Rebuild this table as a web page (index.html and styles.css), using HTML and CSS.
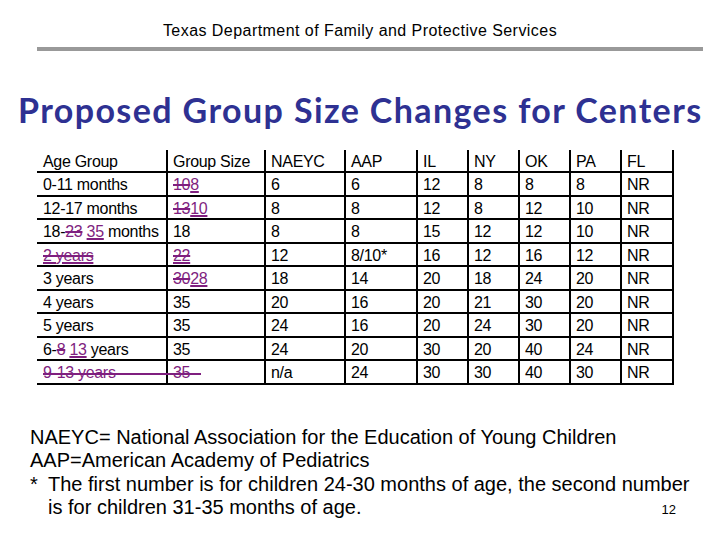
FILE: index.html
```html
<!DOCTYPE html>
<html>
<head>
<meta charset="utf-8">
<link rel="stylesheet" href="styles.css">
</head>
<body>
<div class="slide">
  <header class="top">
    <div class="agency">Texas Department of Family and Protective Services</div>
    <div class="rule"></div>
  </header>
  <h1 class="title">Proposed Group Size Changes for Centers</h1>
  <table class="grid">
    <colgroup>
      <col class="c1"><col class="c2"><col class="c3"><col class="c4"><col class="c5"><col class="c6"><col class="c7"><col class="c8"><col class="c9">
    </colgroup>
    <thead>
      <tr><th>Age Group</th><th>Group Size</th><th>NAEYC</th><th>AAP</th><th>IL</th><th>NY</th><th>OK</th><th>PA</th><th>FL</th></tr>
    </thead>
    <tbody>
      <tr><td>0-11 months</td><td><s class="ed">10</s><u class="ed">8</u></td><td>6</td><td>6</td><td>12</td><td>8</td><td>8</td><td>8</td><td>NR</td></tr>
      <tr><td>12-17 months</td><td><s class="ed">13</s><u class="ed">10</u></td><td>8</td><td>8</td><td>12</td><td>8</td><td>12</td><td>10</td><td>NR</td></tr>
      <tr><td>18-<s class="ed">23</s> <u class="ed">35</u> months</td><td>18</td><td>8</td><td>8</td><td>15</td><td>12</td><td>12</td><td>10</td><td>NR</td></tr>
      <tr><td><span class="ed del">2 years</span></td><td><span class="ed del">22</span></td><td>12</td><td>8/10*</td><td>16</td><td>12</td><td>16</td><td>12</td><td>NR</td></tr>
      <tr><td>3 years</td><td><s class="ed">30</s><u class="ed">28</u></td><td>18</td><td>14</td><td>20</td><td>18</td><td>24</td><td>20</td><td>NR</td></tr>
      <tr><td>4 years</td><td>35</td><td>20</td><td>16</td><td>20</td><td>21</td><td>30</td><td>20</td><td>NR</td></tr>
      <tr><td>5 years</td><td>35</td><td>24</td><td>16</td><td>20</td><td>24</td><td>30</td><td>20</td><td>NR</td></tr>
      <tr><td>6-<s class="ed">8</s> <u class="ed">13</u> years</td><td>35</td><td>24</td><td>20</td><td>30</td><td>20</td><td>40</td><td>24</td><td>NR</td></tr>
      <tr><td class="struckrow"><span class="ed">9-13 years</span></td><td><span class="ed">35</span></td><td>n/a</td><td>24</td><td>30</td><td>30</td><td>40</td><td>30</td><td>NR</td></tr>
    </tbody>
  </table>
  <div class="notes">
    <div class="line">NAEYC= National Association for the Education of Young Children</div>
    <div class="line">AAP=American Academy of Pediatrics</div>
    <div class="line star"><span class="mark">*</span><span>The first number is for children 24-30 months of age, the second number</span></div>
    <div class="line cont"><span>is for children 31-35 months of age.</span><span class="pageno">12</span></div>
  </div>
</div>
</body>
</html>
```
FILE: styles.css
```css
html, body {
  margin: 0;
  padding: 0;
  background: #ffffff;
}
.slide {
  width: 720px;
  height: 540px;
  overflow: hidden;
  padding-top: 22px;
  box-sizing: border-box;
  font-family: "Liberation Sans", Arial, sans-serif;
  color: #000;
}
.agency {
  text-align: center;
  font-size: 16px;
  line-height: 18px;
  letter-spacing: 0.45px;
  color: #000;
}
.rule {
  margin: 7px 0 0 37px;
  width: 666px;
  height: 4px;
  background: #999999;
}
.title {
  margin: 40px 0 0 18px;
  font-family: Lato, "Open Sans", sans-serif;
  font-weight: 700;
  font-size: 34px;
  line-height: 38px;
  color: #2e3192;
  letter-spacing: 1.4px;
  white-space: nowrap;
}
.grid {
  margin: 21px 0 0 37px;
  border-collapse: collapse;
  table-layout: fixed;
  width: 636px;
  font-size: 16px;
  letter-spacing: -0.3px;
  color: #000;
}
.c1 { width: 130px; }
.c2 { width: 98px; }
.c3 { width: 80px; }
.c4 { width: 72px; }
.c5, .c6, .c7, .c8 { width: 51px; }
.c9 { width: 52px; }
.grid th, .grid td {
  text-align: left;
  font-weight: 400;
  padding: 3px 0 0 5px;
  white-space: nowrap;
  border-left: 2px solid #000;
  border-bottom: 2px solid #000;
  line-height: 18px;
  vertical-align: top;
}
.grid th { height: 18px; }
.grid td { height: 18.5px; }
.grid th:first-child, .grid td:first-child { border-left: none; padding-left: 6px; }
.grid th:last-child, .grid td:last-child { border-right: 2px solid #000; }
.ed { color: #7f1f7f; }
s.ed { text-decoration: line-through; text-decoration-thickness: 2px; }
u.ed { text-decoration: underline; text-decoration-thickness: 2px; }
.del { text-decoration: line-through underline; text-decoration-thickness: 2px; }
.struckrow { position: relative; }
.struckrow::after {
  content: "";
  position: absolute;
  left: 6px;
  top: 12px;
  width: 158px;
  height: 2px;
  background: #7f1f7f;
}
.notes {
  margin: 41px 0 0 30px;
  width: 662px;
  font-size: 20px;
  line-height: 23.5px;
  color: #000;
}
.line { white-space: nowrap; }
.star { display: flex; }
.mark { width: 18px; flex: none; }
.cont {
  display: flex;
  justify-content: space-between;
  align-items: baseline;
  padding-left: 18px;
}
.pageno { font-size: 13px; margin-right: 16px; }
```
